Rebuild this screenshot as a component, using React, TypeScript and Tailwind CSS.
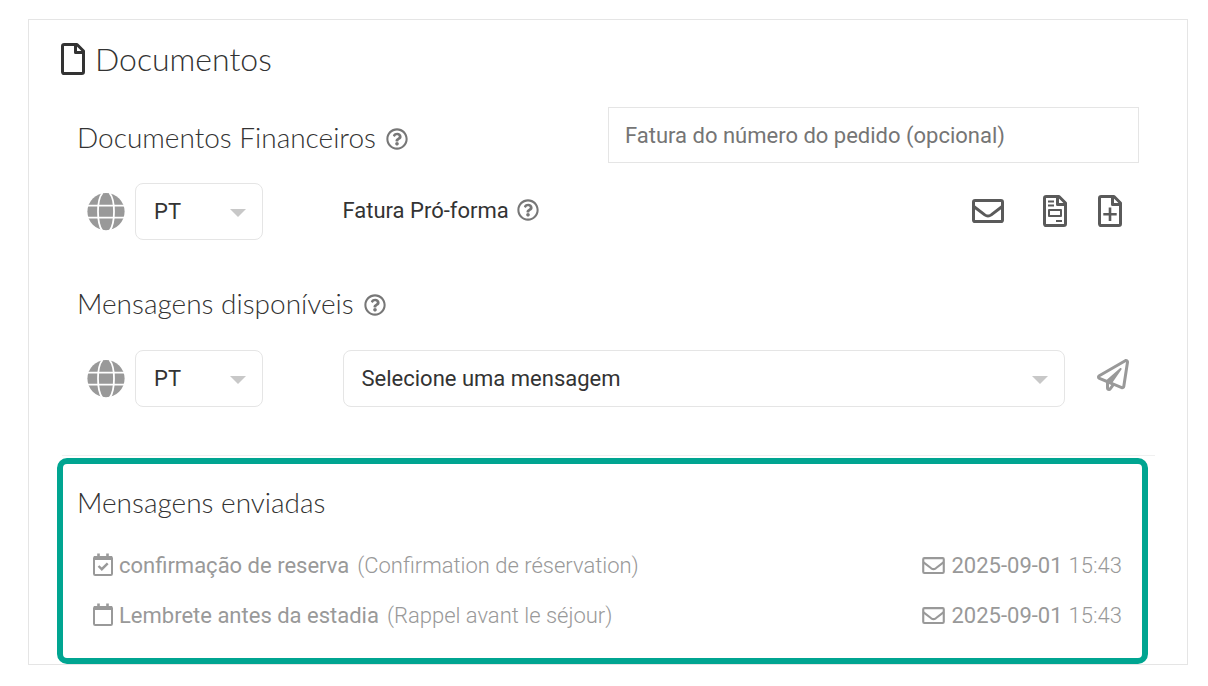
import type { ReactNode } from "react";
import { FaRegPaperPlane, FaRegQuestionCircle } from "react-icons/fa";

function PageIcon({ className, children }: { className?: string; children?: ReactNode }) {
  return (
    <svg viewBox="0 0 24 32" className={`h-8 w-6 ${className ?? ""}`} fill="none" stroke="currentColor" strokeWidth="3" strokeLinejoin="round" aria-hidden="true">
      <path d="M3.2 1.5H16L22.5 8V28.8Q22.5 30.5 20.8 30.5H3.2Q1.5 30.5 1.5 28.8V3.2Q1.5 1.5 3.2 1.5Z" />
      <path d="M14.5 2V9.5H22" />
      {children}
    </svg>
  );
}

function EnvelopeIcon({ className }: { className: string }) {
  return (
    <svg viewBox="0 0 32 24" className={className} fill="none" stroke="currentColor" strokeWidth="3" strokeLinejoin="round" aria-hidden="true">
      <rect x="1.5" y="1.5" width="29" height="21" rx="1.6" />
      <path d="M1.5 7.2L12.8 15.9Q16 18.2 19.2 15.9L30.5 7.2" />
    </svg>
  );
}

function GlobeIcon() {
  return (
    <svg viewBox="0 0 38 38" className="h-[38px] w-[38px] text-[#999]" fill="none" aria-hidden="true">
      <circle cx="19" cy="18.6" r="18.6" fill="currentColor" />
      <g stroke="#fff" strokeWidth="1.8">
        <path d="M0 12.6H38M0 24.6H38" />
        <path d="M15.5 0C9.5 7 9.5 30 15.5 38M22.5 0C28.5 7 28.5 30 22.5 38" />
      </g>
    </svg>
  );
}

function CalendarIcon({ checked }: { checked: boolean }) {
  return (
    <svg viewBox="0 0 20 24" className="h-6 w-5 shrink-0" fill="none" stroke="currentColor" strokeWidth="2" aria-hidden="true">
      <rect x="1" y="4" width="18" height="18" rx="1.2" />
      <path d="M1 5H19" strokeWidth="4" />
      <path d="M5.5 0.5V4M14.5 0.5V4" strokeWidth="2.6" />
      {checked && <path d="M5.5 13L8.8 16.2L14.7 10.3" strokeWidth="2.4" />}
    </svg>
  );
}

function Help({ label }: { label: string }) {
  return (
    <button type="button" aria-label={label} className="text-[#777]">
      <FaRegQuestionCircle className="h-[22px] w-[22px]" />
    </button>
  );
}

function SectionTitle({ title, help }: { title: string; help: string }) {
  return (
    <div className="flex items-center gap-[10px]">
      <h2 className={heading}>{title}</h2>
      <div className="flex pt-[3px]">
        <Help label={help} />
      </div>
    </div>
  );
}

function Dropdown({ label, options, className }: { label: string; options: string[]; className: string }) {
  return (
    <div className={`relative ${className}`}>
      <select aria-label={label} className="h-[57px] w-full appearance-none rounded-lg border border-[#e5e5e5] bg-white pr-12 pl-[18px] text-[22px] text-[#333]">
        {options.map((o) => (
          <option key={o}>{o}</option>
        ))}
      </select>
      <svg viewBox="0 0 16 8" className="pointer-events-none absolute top-[26px] right-[17px] h-2 w-4 text-[#c8c8c8]" fill="currentColor" aria-hidden="true">
        <path d="M0 0H16L8 8Z" />
      </svg>
    </div>
  );
}

function Language({ label }: { label: string }) {
  return (
    <div className="flex items-center gap-[10px] pl-[10px]">
      <GlobeIcon />
      <Dropdown label={label} options={["PT", "EN", "FR"]} className="w-32" />
    </div>
  );
}

const heading = "font-['Lato',sans-serif] text-[28px] leading-[48px] font-light text-[#333]";

const sent = [
  { name: "confirmação de reserva", original: "(Confirmation de réservation)", checked: true },
  { name: "Lembrete antes da estadia", original: "(Rappel avant le séjour)", checked: false },
];

export default function App() {
  return (
    <main className="bg-white pt-[19px] pr-5 pb-5 pl-7 font-['Roboto',sans-serif] text-[22px] text-[#333]">
      <section className="border border-[#e5e5e5] pt-[23px]">
        <h1 className="flex h-8 items-center gap-[10px] pl-8 font-['Lato',sans-serif] text-[32px] font-light">
          <PageIcon />
          Documentos
        </h1>

        <div className="mt-8 mr-12 ml-12">
          <div className="grid grid-cols-2 items-center">
            <div className="pt-1">
              <SectionTitle title="Documentos Financeiros" help="Ajuda sobre documentos financeiros" />
            </div>
            <input
              type="text"
              aria-label="Fatura do número do pedido (opcional)"
              placeholder="Fatura do número do pedido (opcional)"
              className="h-14 w-full border border-[#e5e5e5] px-4 placeholder:text-[#757575]"
            />
          </div>

          <div className="mt-5 grid grid-cols-4 items-center">
            <Language label="Idioma do documento" />
            <div className="col-span-2 flex items-center gap-2 pb-[3px]">
              <span>Fatura Pró-forma</span>
              <Help label="Ajuda sobre a fatura pró-forma" />
            </div>
            <div className="flex items-center justify-end pr-[17px] pb-[2px] text-[#5a5a5a]">
              <button type="button" aria-label="Enviar por e-mail" className="mr-[39px]">
                <EnvelopeIcon className="h-6 w-8" />
              </button>
              <button type="button" aria-label="Ver fatura" className="mr-[31px]">
                <PageIcon>
                  <path d="M5 6.5H11M5 10.5H11M13 26H19" strokeWidth="2" />
                  <rect x="6" y="15" width="12" height="6" strokeWidth="2" />
                </PageIcon>
              </button>
              <button type="button" aria-label="Criar fatura">
                <PageIcon>
                  <path d="M12 12.5V26M5.3 19.2H18.7" strokeWidth="2.6" />
                </PageIcon>
              </button>
            </div>
          </div>

          <div className="mt-[39px]">
            <SectionTitle title="Mensagens disponíveis" help="Ajuda sobre mensagens disponíveis" />
          </div>

          <div className="mt-[23px] grid grid-cols-4 items-center">
            <Language label="Idioma da mensagem" />
            <div className="col-span-3 flex items-center gap-8 pr-[10px]">
              <Dropdown label="Mensagem" options={["Selecione uma mensagem", ...sent.map((m) => m.name)]} className="flex-1" />
              <button type="button" aria-label="Enviar mensagem" className="pb-2 text-[#999]">
                <FaRegPaperPlane className="h-8 w-8" />
              </button>
            </div>
          </div>
        </div>

        <hr className="mt-12 mr-8 ml-[33px] border-[#f0f0f0]" />

        <section className="mt-[2px] mr-[39px] ml-7 rounded-[10px] border-6 border-[#00a591] pt-[14px] pb-[18px] pl-[14px]">
          <h2 className={heading}>Mensagens enviadas</h2>
          <ul className="mt-[14px] pr-5 pl-4 text-[#999]">
            {sent.map((m) => (
              <li key={m.name} className="flex h-[50px] items-center gap-[6px]">
                <CalendarIcon checked={m.checked} />
                <span>{m.name}</span>
                <span className="pl-[2px] font-light">{m.original}</span>
                <span className="ml-auto flex items-center gap-[6px]">
                  <EnvelopeIcon className="h-[17px] w-[23px]" />
                  <span>2025-09-01</span>
                  <span className="font-light">15:43</span>
                </span>
              </li>
            ))}
          </ul>
        </section>
      </section>
    </main>
  );
}
